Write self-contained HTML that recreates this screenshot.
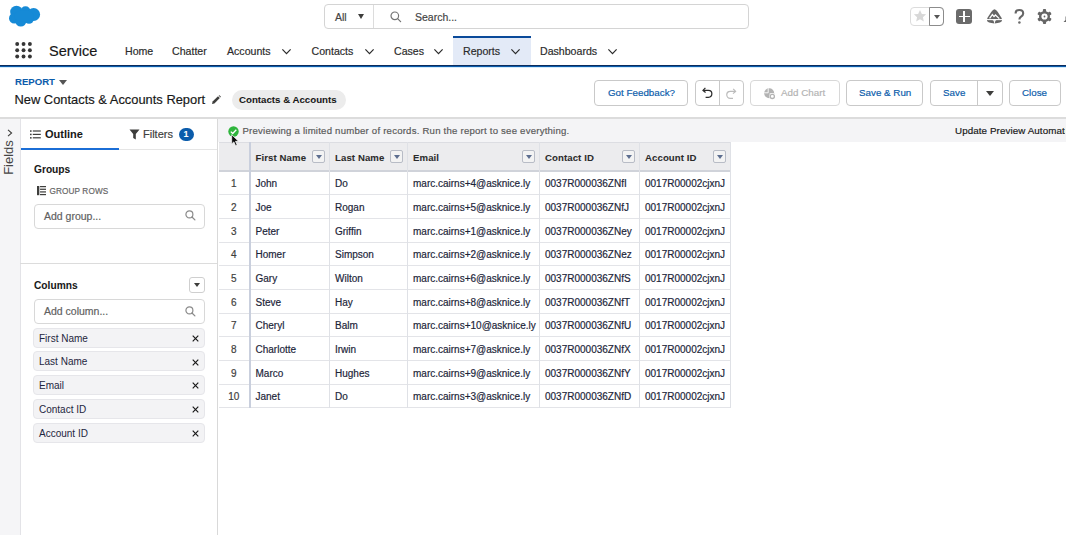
<!DOCTYPE html>
<html><head><meta charset="utf-8">
<style>
*{margin:0;padding:0;box-sizing:border-box}
html,body{width:1066px;height:535px;overflow:hidden;background:#fff;font-family:"Liberation Sans",sans-serif;color:#181818}
.a{position:absolute}
.t{position:absolute;white-space:nowrap;line-height:1;-webkit-text-stroke:.18px currentColor}
.t[style*="bold"],.hd{-webkit-text-stroke:.05px currentColor}
svg{position:absolute;overflow:visible}
.chev{position:absolute;width:9px;height:5px}
.btn{position:absolute;border:1px solid #c9c9c9;border-radius:4px;background:#fff}
.bt{position:absolute;white-space:nowrap;line-height:1;-webkit-text-stroke:.18px currentColor;color:#0b5cab;font-size:9.8px}
.grid div{position:absolute}
.hd{font-weight:bold;font-size:9.6px;letter-spacing:.1px;color:#2b2b2b}
.cell{font-size:10px;color:#1c2539}
.fb{position:absolute;width:13px;height:13px;border:1px solid #b8bcc6;border-radius:2px;background:#f3f3f3}
.fb:after{content:"";position:absolute;left:3px;top:4px;border-left:3px solid transparent;border-right:3px solid transparent;border-top:4px solid #5d6e8f}
.pill{position:absolute;left:33px;width:172px;height:20px;background:#f3f3f5;border:1px solid #e6e6ea;border-radius:4px}
.pill span{position:absolute;left:5px;top:5px;font-size:10px;line-height:1;color:#1e2640;white-space:nowrap}
.pill i{position:absolute;left:158px;top:6px;width:7px;height:7px}
</style></head>
<body>

<!-- ============ TOP HEADER ============ -->
<svg style="left:0;top:0" width="48" height="32" viewBox="0 0 48 32">
  <g fill="#168ad6">
    <circle cx="16.5" cy="12" r="6.3"/>
    <circle cx="25.5" cy="11.2" r="5"/>
    <circle cx="33.6" cy="14.5" r="6.5"/>
    <circle cx="14.2" cy="18.2" r="5.2"/>
    <circle cx="20.8" cy="21" r="5.6"/>
    <circle cx="29" cy="19" r="4.8"/>
    <ellipse cx="24" cy="16" rx="10" ry="6"/>
  </g>
</svg>

<!-- search -->
<div class="a" style="left:324px;top:4px;width:425px;height:25px;border:1px solid #d4d4d4;border-radius:4px"></div>
<div class="a" style="left:373px;top:5px;width:1px;height:23px;background:#dcdcdc"></div>
<div class="t" style="left:335px;top:11.5px;font-size:10.5px;color:#444">All</div>
<div class="a" style="left:357.5px;top:14.3px;width:0;height:0;border-left:3.9px solid transparent;border-right:3.9px solid transparent;border-top:5.3px solid #3e3e3c"></div>
<svg style="left:389.5px;top:10.5px" width="12" height="12" viewBox="0 0 12 12"><circle cx="4.8" cy="4.8" r="3.8" fill="none" stroke="#747474" stroke-width="1.2"/><line x1="7.6" y1="7.6" x2="10.6" y2="10.6" stroke="#747474" stroke-width="1.3" stroke-linecap="round"/></svg>
<div class="t" style="left:415px;top:11.5px;font-size:10.5px;color:#444">Search...</div>

<!-- right icons -->
<div class="a" style="left:910px;top:7px;width:34px;height:19px;border:1px solid #dcdcdc;border-radius:4px"></div>
<div class="a" style="left:929px;top:7px;width:15px;height:19px;border:1px solid #8c8c8c;border-radius:0 4px 4px 0"></div>
<svg style="left:913px;top:9px" width="14" height="14" viewBox="0 0 24 24"><path d="M12 1.5l3.2 7 7.3.7-5.5 4.9 1.6 7.4L12 17.6l-6.6 3.9 1.6-7.4L1.5 9.2l7.3-.7z" fill="#d8d8d8"/></svg>
<div class="a" style="left:933.5px;top:15px;width:0;height:0;border-left:3.5px solid transparent;border-right:3.5px solid transparent;border-top:4px solid #555"></div>
<div class="a" style="left:956px;top:8.5px;width:16px;height:15.5px;background:#6b6b6b;border-radius:3px"></div>
<div class="a" style="left:963.3px;top:11px;width:1.6px;height:10.5px;background:#fff"></div>
<div class="a" style="left:958.5px;top:15.5px;width:11px;height:1.6px;background:#fff"></div>
<svg style="left:987px;top:9px" width="15" height="15" viewBox="0 0 15 15"><path d="M7.5 .3Q8.9 .3 10.8 3L14.3 8.6Q15.2 10.3 15 11.6Q14.4 14.2 7.5 14.5Q.6 14.2 0 11.6Q-.2 10.3.7 8.6L4.2 3Q6.1.3 7.5.3z" fill="#666"/><path d="M2.6 9.4L5.4 5.6 7 7.6 8.4 6 12.3 9.6" fill="none" stroke="#fff" stroke-width="1.25"/><path d="M0 10.6h15" stroke="#fff" stroke-width="1.1"/><path d="M7.5 10.6v4M5.8 11.2l1.7 1.3 1.7-1.3" fill="none" stroke="#fff" stroke-width=".9"/></svg>
<svg style="left:1014px;top:9px" width="11" height="15" viewBox="0 0 11 15"><path d="M1.6 4.4C1.6 2.3 3.2 1 5.3 1 7.5 1 9.2 2.4 9.2 4.4 9.2 6.2 8 7 6.8 7.8 5.8 8.5 5.4 9 5.4 10.5" fill="none" stroke="#666" stroke-width="2.1"/><circle cx="5.4" cy="13.5" r="1.25" fill="#6b6b6b"/></svg>
<svg style="left:1037.2px;top:9.2px" width="15" height="15" viewBox="0 0 15 15"><g fill="#666"><circle cx="7.5" cy="7.5" r="5.5"/><rect x="5.9" y="0.09999999999999964" width="3.2" height="3" rx=".9" transform="rotate(0 7.5 7.5)"/><rect x="5.9" y="0.09999999999999964" width="3.2" height="3" rx=".9" transform="rotate(60 7.5 7.5)"/><rect x="5.9" y="0.09999999999999964" width="3.2" height="3" rx=".9" transform="rotate(120 7.5 7.5)"/><rect x="5.9" y="0.09999999999999964" width="3.2" height="3" rx=".9" transform="rotate(180 7.5 7.5)"/><rect x="5.9" y="0.09999999999999964" width="3.2" height="3" rx=".9" transform="rotate(240 7.5 7.5)"/><rect x="5.9" y="0.09999999999999964" width="3.2" height="3" rx=".9" transform="rotate(300 7.5 7.5)"/></g><circle cx="7.5" cy="7.5" r="3.1" fill="#fff"/><circle cx="7.5" cy="7.5" r=".9" fill="#666"/></svg>
<svg style="left:1062.5px;top:9px" width="10" height="14" viewBox="0 0 10 14"><path d="M2.5 7.5V11L.5 13H5V7.5z" fill="#666"/></svg>

<!-- ============ NAV ============ -->
<svg style="left:14px;top:41px" width="20" height="18" viewBox="0 0 20 18"><g fill="#363636"><circle cx="3.2" cy="3" r="1.95"/><circle cx="9.55" cy="3" r="1.95"/><circle cx="15.9" cy="3" r="1.95"/><circle cx="3.2" cy="9.25" r="1.95"/><circle cx="9.55" cy="9.25" r="1.95"/><circle cx="15.9" cy="9.25" r="1.95"/><circle cx="3.2" cy="15.5" r="1.95"/><circle cx="9.55" cy="15.5" r="1.95"/><circle cx="15.9" cy="15.5" r="1.95"/></g></svg>
<div class="t" style="left:49px;top:44px;font-size:14.5px;color:#181818">Service</div>

<div class="a" style="left:453px;top:36px;width:77.5px;height:29px;background:#e3eaf7"></div>
<div class="a" style="left:453px;top:36px;width:77.5px;height:2.2px;background:#0a4a9a"></div>

<div class="t" style="left:125px;top:46px;font-size:10.6px;color:#2b2b2b">Home</div>
<div class="t" style="left:172px;top:46px;font-size:10.6px;color:#2b2b2b">Chatter</div>
<div class="t" style="left:227px;top:46px;font-size:10.6px;color:#2b2b2b">Accounts</div>
<div class="t" style="left:311.5px;top:46px;font-size:10.6px;color:#2b2b2b">Contacts</div>
<div class="t" style="left:394px;top:46px;font-size:10.6px;color:#2b2b2b">Cases</div>
<div class="t" style="left:463px;top:46px;font-size:10.6px;color:#2b2b2b">Reports</div>
<div class="t" style="left:540px;top:46px;font-size:10.6px;color:#2b2b2b">Dashboards</div>
<svg class="chev" style="left:282px;top:48.9px" viewBox="0 0 9 5"><path d="M.4 .4L4.5 4.6 8.6 .4" fill="none" stroke="#2b2b2b" stroke-width="1.2"/></svg>
<svg class="chev" style="left:365px;top:48.9px" viewBox="0 0 9 5"><path d="M.4 .4L4.5 4.6 8.6 .4" fill="none" stroke="#2b2b2b" stroke-width="1.2"/></svg>
<svg class="chev" style="left:434px;top:48.9px" viewBox="0 0 9 5"><path d="M.4 .4L4.5 4.6 8.6 .4" fill="none" stroke="#2b2b2b" stroke-width="1.2"/></svg>
<svg class="chev" style="left:511px;top:48.9px" viewBox="0 0 9 5"><path d="M.4 .4L4.5 4.6 8.6 .4" fill="none" stroke="#2b2b2b" stroke-width="1.2"/></svg>
<svg class="chev" style="left:608px;top:48.9px" viewBox="0 0 9 5"><path d="M.4 .4L4.5 4.6 8.6 .4" fill="none" stroke="#2b2b2b" stroke-width="1.2"/></svg>

<div class="a" style="left:0;top:65px;width:1066px;height:1px;background:#0c2c5c"></div>
<div class="a" style="left:0;top:66px;width:1066px;height:1.2px;background:#0b5cab"></div>
<div class="a" style="left:0;top:67.2px;width:1066px;height:.8px;background:#d3eafa"></div>

<!-- ============ REPORT HEADER ============ -->
<div class="t" style="left:15px;top:77px;font-size:9.6px;font-weight:bold;color:#0b5cab">REPORT</div>
<div class="a" style="left:59px;top:80px;width:0;height:0;border-left:4px solid transparent;border-right:4px solid transparent;border-top:5.5px solid #555"></div>
<div class="t" style="left:14.5px;top:93.5px;font-size:12.9px;color:#181818">New Contacts &amp; Accounts Report</div>
<svg style="left:211.3px;top:95px" width="10" height="10" viewBox="0 0 10 10"><path d="M1 9l.6-2.4L7 1.2 8.8 3 3.4 8.4z" fill="#3e3e3c"/><path d="M7.6.6l.8-.4 1.4 1.4-.4.8z" fill="#3e3e3c"/></svg>
<div class="a" style="left:231.5px;top:90px;width:114px;height:19.5px;background:#ececec;border-radius:10px"></div>
<div class="t" style="left:239px;top:95px;font-size:9.7px;font-weight:bold;color:#181818">Contacts &amp; Accounts</div>

<div class="btn" style="left:594px;top:80px;width:94px;height:26px"></div>
<div class="bt" style="left:608px;top:88.2px">Got Feedback?</div>
<div class="btn" style="left:694.5px;top:80px;width:49.5px;height:26px"></div>
<div class="a" style="left:719px;top:81px;width:1px;height:24px;background:#c9c9c9"></div>
<svg style="left:702.3px;top:87px" width="12" height="12" viewBox="0 0 12 12"><path d="M3.4 .9L1 3.4 3.6 5.6" fill="none" stroke="#2b2b2b" stroke-width="1.25"/><path d="M1.3 3.4H6.4a3.4 3.4 0 0 1 0 6.9H3.6" fill="none" stroke="#2b2b2b" stroke-width="1.25"/></svg>
<svg style="left:725.3px;top:87.5px" width="12" height="12" viewBox="0 0 12 12"><path d="M8.2 .9L10.6 3.4 8 5.6" fill="none" stroke="#bcbcbc" stroke-width="1.2"/><path d="M10.3 3.4H5.2a3.4 3.4 0 0 0 0 6.9H8" fill="none" stroke="#bcbcbc" stroke-width="1.2"/></svg>
<div class="btn" style="left:750px;top:80px;width:89.5px;height:26px;border-color:#d8d8d8"></div>
<svg style="left:764.3px;top:87.5px" width="12" height="12" viewBox="0 0 12 12"><circle cx="5.2" cy="5.2" r="5" fill="#b3b3b3"/><path d="M4.2 .2v4.6H.2M5.6 5.8l4.2 0" fill="none" stroke="#fff" stroke-width=".9"/><circle cx="8.3" cy="8.4" r="3.1" fill="#fff"/><circle cx="8.3" cy="8.4" r="2.1" fill="none" stroke="#b3b3b3" stroke-width="1.3"/></svg>
<div class="bt" style="left:781px;top:88.2px;color:#b3b3b3">Add Chart</div>
<div class="btn" style="left:846px;top:80px;width:77px;height:26px"></div>
<div class="bt" style="left:859px;top:88.2px">Save &amp; Run</div>
<div class="btn" style="left:929.5px;top:80px;width:73px;height:26px"></div>
<div class="a" style="left:977px;top:81px;width:1px;height:24px;background:#c9c9c9"></div>
<div class="bt" style="left:943px;top:88.2px">Save</div>
<div class="a" style="left:986px;top:91px;width:0;height:0;border-left:4px solid transparent;border-right:4px solid transparent;border-top:5px solid #3e3e3c"></div>
<div class="btn" style="left:1009px;top:80px;width:52px;height:26px"></div>
<div class="bt" style="left:1022px;top:88.2px">Close</div>

<div class="a" style="left:0;top:117px;width:1066px;height:1.5px;background:#dcdcdc"></div>

<!-- ============ LEFT FIELDS STRIP ============ -->
<div class="a" style="left:0;top:118.5px;width:20.6px;height:417px;background:#f5f5f7;border-right:1px solid #e3e3e7"></div>
<svg style="left:7px;top:129px" width="6" height="8" viewBox="0 0 6 8"><path d="M1 .8L4.6 4 1 7.2" fill="none" stroke="#3e3e3c" stroke-width="1.1"/></svg>
<div class="t" style="left:-8.7px;top:150.5px;font-size:13px;color:#444;-webkit-text-stroke:0;transform:rotate(-90deg);transform-origin:center">Fields</div>

<!-- ============ OUTLINE PANEL ============ -->
<div class="a" style="left:217px;top:118.5px;width:1px;height:417px;background:#d9d9d9"></div>
<svg style="left:30px;top:130px" width="11" height="9" viewBox="0 0 11 9"><g fill="#3e3e3c"><rect x="0" y="0.3" width="1.6" height="1.5"/><rect x="0" y="3.7" width="1.6" height="1.5"/><rect x="0" y="7.1" width="1.6" height="1.5"/><rect x="2.8" y="0.4" width="8" height="1.2"/><rect x="2.8" y="3.8" width="8" height="1.2"/><rect x="2.8" y="7.2" width="8" height="1.2"/></g></svg>
<div class="t" style="left:45px;top:129.3px;font-size:11px;font-weight:bold;color:#181818">Outline</div>
<svg style="left:129px;top:129px" width="11" height="11" viewBox="0 0 11 11"><path d="M.5 .5h10L6.8 5v5.5L4.2 9V5z" fill="#3e3e3c"/></svg>
<div class="t" style="left:143px;top:129.3px;font-size:11px;color:#3e3e3c">Filters</div>
<div class="a" style="left:179px;top:127.5px;width:15px;height:13.5px;background:#0b5cab;border-radius:7px"></div>
<div class="t" style="left:183.5px;top:130px;font-size:9px;font-weight:bold;color:#fff">1</div>
<div class="a" style="left:21px;top:149px;width:196px;height:1px;background:#e5e5e5"></div>
<div class="a" style="left:21px;top:147.5px;width:98px;height:2.5px;background:#1b6ed6"></div>

<div class="t" style="left:34px;top:164.8px;font-size:10.2px;font-weight:bold;color:#181818">Groups</div>
<svg style="left:36.8px;top:186px" width="9.2" height="9.2" viewBox="0 0 10 9" preserveAspectRatio="none"><rect x="0" y="0" width="2.5" height="9" fill="#3e3e3c"/><g fill="#3e3e3c"><rect x="3.3" y="0" width="6.5" height="1.2"/><rect x="3.3" y="2.6" width="6.5" height="1.2"/><rect x="3.3" y="5.2" width="6.5" height="1.2"/><rect x="3.3" y="7.8" width="6.5" height="1.2"/></g></svg>
<div class="t" style="left:49.5px;top:187.9px;font-size:8.2px;letter-spacing:.12px;color:#666">GROUP ROWS</div>
<div class="a" style="left:33.5px;top:203.5px;width:171.5px;height:25px;border:1px solid #d8d8d8;border-radius:4px"></div>
<div class="t" style="left:44px;top:210.5px;font-size:10.5px;color:#606060">Add group...</div>
<svg style="left:184.5px;top:210px" width="11" height="11" viewBox="0 0 12 12"><circle cx="4.8" cy="4.8" r="3.8" fill="none" stroke="#8a8a8a" stroke-width="1.3"/><line x1="7.6" y1="7.6" x2="10.8" y2="10.8" stroke="#8a8a8a" stroke-width="1.4" stroke-linecap="round"/></svg>
<div class="a" style="left:20px;top:263px;width:197px;height:1px;background:#dcdcdc"></div>

<div class="t" style="left:34px;top:280.5px;font-size:10.2px;font-weight:bold;color:#181818">Columns</div>
<div class="a" style="left:189px;top:277px;width:16px;height:15.5px;border:1px solid #cfcfcf;border-radius:3px"></div>
<div class="a" style="left:193.6px;top:282.6px;width:0;height:0;border-left:3.45px solid transparent;border-right:3.45px solid transparent;border-top:4.2px solid #3e3e3c"></div>
<div class="a" style="left:33.5px;top:299px;width:171.5px;height:25px;border:1px solid #d8d8d8;border-radius:4px"></div>
<div class="t" style="left:44px;top:306px;font-size:10.5px;color:#606060">Add column...</div>
<svg style="left:184.5px;top:305.5px" width="11" height="11" viewBox="0 0 12 12"><circle cx="4.8" cy="4.8" r="3.8" fill="none" stroke="#8a8a8a" stroke-width="1.3"/><line x1="7.6" y1="7.6" x2="10.8" y2="10.8" stroke="#8a8a8a" stroke-width="1.4" stroke-linecap="round"/></svg>

<div class="pill" style="top:327.5px"><span>First Name</span><svg style="left:158.3px;top:6.3px" width="7" height="7" viewBox="0 0 7 7"><path d="M.7 .7l5.6 5.6M6.3 .7L.7 6.3" stroke="#181818" stroke-width="1.15"/></svg></div>
<div class="pill" style="top:351.3px"><span>Last Name</span><svg style="left:158.3px;top:6.3px" width="7" height="7" viewBox="0 0 7 7"><path d="M.7 .7l5.6 5.6M6.3 .7L.7 6.3" stroke="#181818" stroke-width="1.15"/></svg></div>
<div class="pill" style="top:375px"><span>Email</span><svg style="left:158.3px;top:6.3px" width="7" height="7" viewBox="0 0 7 7"><path d="M.7 .7l5.6 5.6M6.3 .7L.7 6.3" stroke="#181818" stroke-width="1.15"/></svg></div>
<div class="pill" style="top:398.8px"><span>Contact ID</span><svg style="left:158.3px;top:6.3px" width="7" height="7" viewBox="0 0 7 7"><path d="M.7 .7l5.6 5.6M6.3 .7L.7 6.3" stroke="#181818" stroke-width="1.15"/></svg></div>
<div class="pill" style="top:422.6px"><span>Account ID</span><svg style="left:158.3px;top:6.3px" width="7" height="7" viewBox="0 0 7 7"><path d="M.7 .7l5.6 5.6M6.3 .7L.7 6.3" stroke="#181818" stroke-width="1.15"/></svg></div>

<!-- ============ PREVIEW BAR ============ -->
<div class="a" style="left:218px;top:118.5px;width:848px;height:23.5px;background:#f4f4f6"></div>
<svg style="left:228px;top:126px" width="11" height="11" viewBox="0 0 11 11"><circle cx="5.5" cy="5.5" r="5.2" fill="#2fb53d"/><path d="M2.8 5.6l1.9 1.9 3.6-3.8" fill="none" stroke="#fff" stroke-width="1.3"/></svg>
<div class="t" style="left:242.5px;top:126px;font-size:9.6px;letter-spacing:.22px;color:#5a5a5a">Previewing a limited number of records. Run the report to see everything.</div>
<div class="t" style="left:955px;top:126px;width:110.2px;overflow:hidden;font-size:9.8px;letter-spacing:.09px;color:#181818">Update Preview Automatically</div>
<!-- cursor -->
<svg style="left:231px;top:134.3px;z-index:10" width="9" height="13" viewBox="0 0 9 13"><path d="M.7.7v9.2l2.2-2 1.7 3.9 1.6-.7-1.7-3.8h3z" fill="#0a0a0a" stroke="#fff" stroke-width=".7" stroke-linejoin="round"/></svg>

<!-- ============ TABLE ============ -->
<div id="tbl">
<div class="a" style="left:218.5px;top:142px;width:512.5px;height:29px;background:#ececee"></div>
<div class="a" style="left:218.5px;top:142px;width:512.5px;height:1px;background:#dcdde2"></div>
<div class="a" style="left:218.5px;top:170.1px;width:512.5px;height:1.5px;background:#d0d3da"></div>
<div class="a" style="left:218.5px;top:194.10px;width:512.5px;height:1px;background:#e3e4e8"></div>
<div class="a" style="left:218.5px;top:217.80px;width:512.5px;height:1px;background:#e3e4e8"></div>
<div class="a" style="left:218.5px;top:241.50px;width:512.5px;height:1px;background:#e3e4e8"></div>
<div class="a" style="left:218.5px;top:265.20px;width:512.5px;height:1px;background:#e3e4e8"></div>
<div class="a" style="left:218.5px;top:288.90px;width:512.5px;height:1px;background:#e3e4e8"></div>
<div class="a" style="left:218.5px;top:312.60px;width:512.5px;height:1px;background:#e3e4e8"></div>
<div class="a" style="left:218.5px;top:336.30px;width:512.5px;height:1px;background:#e3e4e8"></div>
<div class="a" style="left:218.5px;top:360.00px;width:512.5px;height:1px;background:#e3e4e8"></div>
<div class="a" style="left:218.5px;top:383.70px;width:512.5px;height:1px;background:#e3e4e8"></div>
<div class="a" style="left:218.5px;top:407.40px;width:512.5px;height:1px;background:#e3e4e8"></div>
<div class="a" style="left:249.0px;top:142px;width:2px;height:266.00px;background:#c9cfdd"></div>
<div class="a" style="left:329px;top:142px;width:1px;height:266.00px;background:#dfe1e6"></div>
<div class="a" style="left:407px;top:142px;width:1px;height:266.00px;background:#dfe1e6"></div>
<div class="a" style="left:539px;top:142px;width:1px;height:266.00px;background:#dfe1e6"></div>
<div class="a" style="left:639px;top:142px;width:1px;height:266.00px;background:#dfe1e6"></div>
<div class="a" style="left:730px;top:142px;width:1px;height:266.00px;background:#dfe1e6"></div>
<div class="t hd" style="left:255.5px;top:152.9px">First Name</div>
<div class="fb" style="left:312px;top:150px"></div>
<div class="t hd" style="left:335px;top:152.9px">Last Name</div>
<div class="fb" style="left:390px;top:150px"></div>
<div class="t hd" style="left:413px;top:152.9px">Email</div>
<div class="fb" style="left:522px;top:150px"></div>
<div class="t hd" style="left:545px;top:152.9px">Contact ID</div>
<div class="fb" style="left:622px;top:150px"></div>
<div class="t hd" style="left:645px;top:152.9px">Account ID</div>
<div class="fb" style="left:713px;top:150px"></div>
<div class="t cell" style="left:218.5px;width:30.5px;text-align:center;top:179.10px;color:#3e3e3c">1</div>
<div class="t cell" style="left:255.5px;top:179.10px">John</div>
<div class="t cell" style="left:335px;top:179.10px">Do</div>
<div class="t cell" style="left:413px;top:179.10px">marc.cairns+4@asknice.ly</div>
<div class="t cell" style="left:545px;top:179.10px">0037R000036ZNfI</div>
<div class="t cell" style="left:645px;top:179.10px">0017R00002cjxnJ</div>
<div class="t cell" style="left:218.5px;width:30.5px;text-align:center;top:202.80px;color:#3e3e3c">2</div>
<div class="t cell" style="left:255.5px;top:202.80px">Joe</div>
<div class="t cell" style="left:335px;top:202.80px">Rogan</div>
<div class="t cell" style="left:413px;top:202.80px">marc.cairns+5@asknice.ly</div>
<div class="t cell" style="left:545px;top:202.80px">0037R000036ZNfJ</div>
<div class="t cell" style="left:645px;top:202.80px">0017R00002cjxnJ</div>
<div class="t cell" style="left:218.5px;width:30.5px;text-align:center;top:226.50px;color:#3e3e3c">3</div>
<div class="t cell" style="left:255.5px;top:226.50px">Peter</div>
<div class="t cell" style="left:335px;top:226.50px">Griffin</div>
<div class="t cell" style="left:413px;top:226.50px">marc.cairns+1@asknice.ly</div>
<div class="t cell" style="left:545px;top:226.50px">0037R000036ZNey</div>
<div class="t cell" style="left:645px;top:226.50px">0017R00002cjxnJ</div>
<div class="t cell" style="left:218.5px;width:30.5px;text-align:center;top:250.20px;color:#3e3e3c">4</div>
<div class="t cell" style="left:255.5px;top:250.20px">Homer</div>
<div class="t cell" style="left:335px;top:250.20px">Simpson</div>
<div class="t cell" style="left:413px;top:250.20px">marc.cairns+2@asknice.ly</div>
<div class="t cell" style="left:545px;top:250.20px">0037R000036ZNez</div>
<div class="t cell" style="left:645px;top:250.20px">0017R00002cjxnJ</div>
<div class="t cell" style="left:218.5px;width:30.5px;text-align:center;top:273.90px;color:#3e3e3c">5</div>
<div class="t cell" style="left:255.5px;top:273.90px">Gary</div>
<div class="t cell" style="left:335px;top:273.90px">Wilton</div>
<div class="t cell" style="left:413px;top:273.90px">marc.cairns+6@asknice.ly</div>
<div class="t cell" style="left:545px;top:273.90px">0037R000036ZNfS</div>
<div class="t cell" style="left:645px;top:273.90px">0017R00002cjxnJ</div>
<div class="t cell" style="left:218.5px;width:30.5px;text-align:center;top:297.60px;color:#3e3e3c">6</div>
<div class="t cell" style="left:255.5px;top:297.60px">Steve</div>
<div class="t cell" style="left:335px;top:297.60px">Hay</div>
<div class="t cell" style="left:413px;top:297.60px">marc.cairns+8@asknice.ly</div>
<div class="t cell" style="left:545px;top:297.60px">0037R000036ZNfT</div>
<div class="t cell" style="left:645px;top:297.60px">0017R00002cjxnJ</div>
<div class="t cell" style="left:218.5px;width:30.5px;text-align:center;top:321.30px;color:#3e3e3c">7</div>
<div class="t cell" style="left:255.5px;top:321.30px">Cheryl</div>
<div class="t cell" style="left:335px;top:321.30px">Balm</div>
<div class="t cell" style="left:413px;top:321.30px">marc.cairns+10@asknice.ly</div>
<div class="t cell" style="left:545px;top:321.30px">0037R000036ZNfU</div>
<div class="t cell" style="left:645px;top:321.30px">0017R00002cjxnJ</div>
<div class="t cell" style="left:218.5px;width:30.5px;text-align:center;top:345.00px;color:#3e3e3c">8</div>
<div class="t cell" style="left:255.5px;top:345.00px">Charlotte</div>
<div class="t cell" style="left:335px;top:345.00px">Irwin</div>
<div class="t cell" style="left:413px;top:345.00px">marc.cairns+7@asknice.ly</div>
<div class="t cell" style="left:545px;top:345.00px">0037R000036ZNfX</div>
<div class="t cell" style="left:645px;top:345.00px">0017R00002cjxnJ</div>
<div class="t cell" style="left:218.5px;width:30.5px;text-align:center;top:368.70px;color:#3e3e3c">9</div>
<div class="t cell" style="left:255.5px;top:368.70px">Marco</div>
<div class="t cell" style="left:335px;top:368.70px">Hughes</div>
<div class="t cell" style="left:413px;top:368.70px">marc.cairns+9@asknice.ly</div>
<div class="t cell" style="left:545px;top:368.70px">0037R000036ZNfY</div>
<div class="t cell" style="left:645px;top:368.70px">0017R00002cjxnJ</div>
<div class="t cell" style="left:218.5px;width:30.5px;text-align:center;top:392.40px;color:#3e3e3c">10</div>
<div class="t cell" style="left:255.5px;top:392.40px">Janet</div>
<div class="t cell" style="left:335px;top:392.40px">Do</div>
<div class="t cell" style="left:413px;top:392.40px">marc.cairns+3@asknice.ly</div>
<div class="t cell" style="left:545px;top:392.40px">0037R000036ZNfD</div>
<div class="t cell" style="left:645px;top:392.40px">0017R00002cjxnJ</div>
</div>

</body></html>
